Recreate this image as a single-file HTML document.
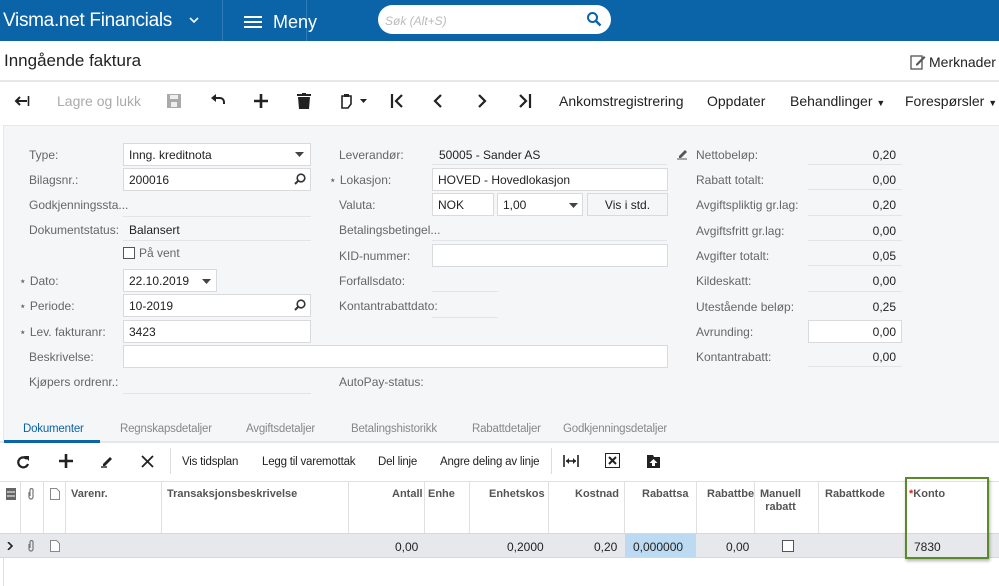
<!DOCTYPE html>
<html><head><meta charset="utf-8"><style>
*{box-sizing:border-box;margin:0;padding:0}
body{width:999px;height:586px;overflow:hidden;background:#fff;font-family:"Liberation Sans",Arial,sans-serif;font-size:12px;color:#222;position:relative}
.a{position:absolute;white-space:nowrap}
.lbl{color:#666;font-size:12px}
.inp{position:absolute;background:#fff;border:1px solid #d8dadd;height:23px;padding:4px 5px;font-size:12px;color:#222}
.ul{position:absolute;border-bottom:1px solid #e2e4e6;height:1px}
.val{position:absolute;font-size:12px;color:#222;text-align:right;width:60px}
.tb{position:absolute;top:93px;font-size:14px;color:#222}
.th{position:absolute;top:488px;font-size:11px;font-weight:bold;color:#555}
.vl{position:absolute;top:482px;height:51px;border-left:1px solid #e0e0e0}
.gt{position:absolute;top:456px;font-size:11.5px;color:#222;letter-spacing:-0.2px}
.tab{position:absolute;top:423px;font-size:11.5px;color:#888;letter-spacing:-0.2px}
</style></head><body>
<div class="a" style="left:0;top:0;width:999px;height:41px;background:#0b63a8"></div>
<div class="a" style="left:3px;top:10px;font-size:19px;color:#fff;letter-spacing:-0.3px">Visma.net Financials</div>
<svg class="a" style="left:189px;top:16px" width="10" height="8"><path d="M1 2l4 4 4-4" stroke="#fff" stroke-width="1.6" fill="none"/></svg>
<div class="a" style="left:222px;top:0;width:1px;height:41px;background:#2f7cb8"></div>
<div class="a" style="left:306px;top:0;width:1px;height:41px;background:#2f7cb8"></div>
<svg class="a" style="left:244px;top:15px" width="18" height="14"><path d="M0 2h18M0 7h18M0 12h18" stroke="#fff" stroke-width="2"/></svg>
<div class="a" style="left:273px;top:12px;font-size:18px;color:#fff">Meny</div>
<div class="a" style="left:378px;top:5px;width:233px;height:29px;background:#fff;border-radius:15px"></div>
<div class="a" style="left:385px;top:14px;font-size:12px;color:#bbb;font-style:italic">Søk (Alt+S)</div>
<svg class="a" style="left:586px;top:11px" width="16" height="16"><circle cx="6.5" cy="6.5" r="4.5" stroke="#0b63a8" stroke-width="2" fill="none"/><path d="M10 10l4.5 4.5" stroke="#0b63a8" stroke-width="2.4"/></svg>
<div class="a" style="left:4px;top:51px;font-size:17px;color:#222">Inngående faktura</div>
<svg class="a" style="left:910px;top:54px" width="16" height="16"><rect x="1" y="2" width="11" height="13" fill="none" stroke="#555" stroke-width="1.3"/><path d="M6 10l8-8 1.5 1.5-8 8H6z" fill="#555"/></svg>
<div class="a" style="left:929px;top:54px;font-size:14px">Merknader</div>
<div class="a" style="left:0;top:80px;width:999px;height:2px;background:#e6e7e9"></div>
<svg class="a" style="left:14px;top:95px" width="16" height="12"><path d="M2 6h11M6 2L2 6l4 4" stroke="#222" stroke-width="2" fill="none"/><path d="M14.5 1v10" stroke="#222" stroke-width="1.6"/></svg>
<div class="tb" style="left:57px;color:#aaa">Lagre og lukk</div>
<svg class="a" style="left:167px;top:94px" width="14" height="14"><rect x="0" y="0" width="14" height="14" fill="#aaa"/><rect x="3" y="1" width="8" height="4" fill="#eee"/><rect x="4" y="8" width="6" height="5" fill="#eee"/></svg>
<svg class="a" style="left:210px;top:94px" width="16" height="12"><path d="M3 4h7a4 4 0 0 1 4 4v2" stroke="#222" stroke-width="2" fill="none"/><path d="M1 4l5-4v8z" fill="#222"/></svg>
<svg class="a" style="left:254px;top:94px" width="14" height="14"><path d="M7 0v14M0 7h14" stroke="#222" stroke-width="2.6"/></svg>
<svg class="a" style="left:297px;top:93px" width="14" height="16"><rect x="0" y="1" width="14" height="2" fill="#222"/><rect x="5" y="0" width="4" height="2" fill="#222"/><path d="M1 4h12l-1 12H2z" fill="#222"/></svg>
<svg class="a" style="left:340px;top:93px" width="30" height="16"><path d="M2 3h9v8l-3 4H2z" fill="none" stroke="#222" stroke-width="1.6"/><rect x="4" y="1" width="5" height="3" fill="#222"/><path d="M20 6h7l-3.5 4z" fill="#222"/></svg>
<svg class="a" style="left:390px;top:94px" width="14" height="14"><path d="M2 0v14" stroke="#222" stroke-width="2.2"/><path d="M12 1L6 7l6 6" stroke="#222" stroke-width="2.2" fill="none"/></svg>
<svg class="a" style="left:433px;top:94px" width="10" height="14"><path d="M8 1L2 7l6 6" stroke="#222" stroke-width="2.2" fill="none"/></svg>
<svg class="a" style="left:477px;top:94px" width="10" height="14"><path d="M2 1l6 6-6 6" stroke="#222" stroke-width="2.2" fill="none"/></svg>
<svg class="a" style="left:518px;top:94px" width="14" height="14"><path d="M2 1l6 6-6 6" stroke="#222" stroke-width="2.2" fill="none"/><path d="M12 0v14" stroke="#222" stroke-width="2.2"/></svg>
<div class="tb" style="left:559px">Ankomstregistrering</div>
<div class="tb" style="left:707px">Oppdater</div>
<div class="tb" style="left:790px">Behandlinger <span style="font-size:9px">▼</span></div>
<div class="tb" style="left:905px">Forespørsler <span style="font-size:9px">▼</span></div>
<div class="a" style="left:3px;top:125px;width:996px;height:285px;background:#f5f6f7;border-top:1px solid #e6e7e9;border-left:1px solid #e6e7e9"></div>
<div class="a lbl" style="left:29px;top:148px">Type:</div>
<div class="inp" style="left:123px;top:143px;width:188px">Inng. kreditnota</div>
<svg class="a" style="left:295px;top:152px" width="9" height="5"><path d="M0 0h9L4.5 5z" fill="#444"/></svg>
<div class="a lbl" style="left:29px;top:173px">Bilagsnr.:</div>
<div class="inp" style="left:123px;top:168px;width:188px">200016</div>
<div class="a lbl" style="left:29px;top:198px">Godkjenningssta...</div>
<div class="ul" style="left:123px;top:216px;width:188px"></div>
<div class="a lbl" style="left:29px;top:223px">Dokumentstatus:</div>
<div class="a" style="left:129px;top:223px">Balansert</div>
<div class="ul" style="left:123px;top:240px;width:188px"></div>
<div class="a" style="left:123px;top:247px;width:12px;height:12px;border:1px solid #555;background:#fff"></div>
<div class="a lbl" style="left:139px;top:246px">På vent</div>
<div class="a lbl" style="left:19px;top:274px">⋆ Dato:</div>
<div class="inp" style="left:123px;top:269px;width:94px">22.10.2019</div>
<svg class="a" style="left:202px;top:279px" width="9" height="5"><path d="M0 0h9L4.5 5z" fill="#444"/></svg>
<div class="a lbl" style="left:19px;top:299px">⋆ Periode:</div>
<div class="inp" style="left:123px;top:294px;width:188px">10-2019</div>
<div class="a lbl" style="left:19px;top:325px">⋆ Lev. fakturanr:</div>
<div class="inp" style="left:123px;top:320px;width:188px">3423</div>
<div class="a lbl" style="left:29px;top:350px">Beskrivelse:</div>
<div class="inp" style="left:123px;top:345px;width:545px"></div>
<div class="a lbl" style="left:29px;top:375px">Kjøpers ordrenr.:</div>
<div class="ul" style="left:123px;top:393px;width:188px"></div>
<svg class="a" style="left:294px;top:173px" width="12" height="12"><circle cx="7" cy="5" r="3.8" stroke="#333" stroke-width="1.6" fill="none"/><path d="M4.3 7.7L1 11" stroke="#333" stroke-width="2"/></svg>
<svg class="a" style="left:294px;top:299px" width="12" height="12"><circle cx="7" cy="5" r="3.8" stroke="#333" stroke-width="1.6" fill="none"/><path d="M4.3 7.7L1 11" stroke="#333" stroke-width="2"/></svg>
<svg class="a" style="left:651px;top:173px" width="12" height="12"><circle cx="7" cy="5" r="3.8" stroke="#333" stroke-width="1.6" fill="none"/><path d="M4.3 7.7L1 11" stroke="#333" stroke-width="2"/></svg>
<svg class="a" style="left:477px;top:198px" width="12" height="12"><circle cx="7" cy="5" r="3.8" stroke="#333" stroke-width="1.6" fill="none"/><path d="M4.3 7.7L1 11" stroke="#333" stroke-width="2"/></svg>
<div class="a lbl" style="left:339px;top:148px">Leverandør:</div>
<div class="a" style="left:439px;top:148px">50005 - Sander AS</div>
<div class="ul" style="left:432px;top:164px;width:235px"></div>
<div class="a lbl" style="left:329px;top:173px">⋆ Lokasjon:</div>
<div class="inp" style="left:432px;top:168px;width:236px">HOVED - Hovedlokasjon</div>
<div class="a lbl" style="left:339px;top:198px">Valuta:</div>
<div class="inp" style="left:432px;top:193px;width:62px">NOK</div>
<div class="inp" style="left:497px;top:193px;width:86px">1,00</div>
<svg class="a" style="left:569px;top:203px" width="9" height="5"><path d="M0 0h9L4.5 5z" fill="#444"/></svg>
<div class="inp" style="left:587px;top:193px;width:81px;background:#f5f6f7;text-align:center">Vis i std.</div>
<div class="a lbl" style="left:339px;top:223px">Betalingsbetingel...</div>
<div class="ul" style="left:432px;top:240px;width:235px"></div>
<div class="a lbl" style="left:339px;top:249px">KID-nummer:</div>
<div class="inp" style="left:432px;top:244px;width:236px"></div>
<div class="a lbl" style="left:339px;top:274px">Forfallsdato:</div>
<div class="ul" style="left:432px;top:291px;width:66px"></div>
<div class="a lbl" style="left:339px;top:299px">Kontantrabattdato:</div>
<div class="ul" style="left:432px;top:317px;width:66px"></div>
<div class="a lbl" style="left:339px;top:375px">AutoPay-status:</div>
<svg class="a" style="left:676px;top:148px" width="13" height="12"><path d="M3 8l6-6 2 2-6 6H3z" fill="#555"/><path d="M1 11h10" stroke="#555"/></svg>
<div class="a lbl" style="left:696px;top:148px">Nettobeløp:</div>
<div class="a lbl" style="left:696px;top:173px">Rabatt totalt:</div>
<div class="a lbl" style="left:696px;top:198px">Avgiftspliktig gr.lag:</div>
<div class="a lbl" style="left:696px;top:224px">Avgiftsfritt gr.lag:</div>
<div class="a lbl" style="left:696px;top:249px">Avgifter totalt:</div>
<div class="a lbl" style="left:696px;top:274px">Kildeskatt:</div>
<div class="a lbl" style="left:696px;top:300px">Utestående beløp:</div>
<div class="a lbl" style="left:696px;top:325px">Avrunding:</div>
<div class="a lbl" style="left:696px;top:350px">Kontantrabatt:</div>
<div class="inp" style="left:808px;top:320px;width:94px"></div>
<div class="val" style="left:836px;top:148px">0,20</div>
<div class="val" style="left:836px;top:173px">0,00</div>
<div class="val" style="left:836px;top:198px">0,20</div>
<div class="val" style="left:836px;top:224px">0,00</div>
<div class="val" style="left:836px;top:249px">0,05</div>
<div class="val" style="left:836px;top:274px">0,00</div>
<div class="val" style="left:836px;top:300px">0,25</div>
<div class="val" style="left:836px;top:325px">0,00</div>
<div class="val" style="left:836px;top:350px">0,00</div>
<div class="ul" style="left:808px;top:164px;width:94px"></div>
<div class="ul" style="left:808px;top:189px;width:94px"></div>
<div class="ul" style="left:808px;top:215px;width:94px"></div>
<div class="ul" style="left:808px;top:240px;width:94px"></div>
<div class="ul" style="left:808px;top:265px;width:94px"></div>
<div class="ul" style="left:808px;top:291px;width:94px"></div>
<div class="ul" style="left:808px;top:366px;width:94px"></div>
<div class="a" style="left:3px;top:410px;width:996px;height:32px;background:#f5f6f7;border-left:1px solid #e6e7e9"></div>
<div class="a" style="left:0;top:441px;width:999px;height:2px;background:#e6e7e9"></div>
<div class="tab" style="left:23px;color:#0b63a8">Dokumenter</div>
<div class="a" style="left:4px;top:440px;width:96px;height:3px;background:#0b63a8"></div>
<div class="tab" style="left:120px">Regnskapsdetaljer</div>
<div class="tab" style="left:246px">Avgiftsdetaljer</div>
<div class="tab" style="left:351px">Betalingshistorikk</div>
<div class="tab" style="left:472px">Rabattdetaljer</div>
<div class="tab" style="left:563px">Godkjenningsdetaljer</div>
<svg class="a" style="left:16px;top:455px" width="14" height="14"><path d="M11 4A5 5 0 1 0 12 9" stroke="#222" stroke-width="2.2" fill="none"/><path d="M8 1h5v5z" fill="#222"/></svg>
<svg class="a" style="left:59px;top:454px" width="14" height="14"><path d="M7 0v14M0 7h14" stroke="#222" stroke-width="2.6"/></svg>
<svg class="a" style="left:100px;top:454px" width="14" height="14"><path d="M3 10l7-7 2 2-7 7H3z" fill="#222"/><path d="M1 13h6" stroke="#222" stroke-width="1.4"/></svg>
<svg class="a" style="left:141px;top:455px" width="13" height="13"><path d="M1 1l11 11M12 1L1 12" stroke="#222" stroke-width="1.8"/></svg>
<div class="a" style="left:170px;top:448px;width:1px;height:26px;background:#ddd"></div>
<div class="gt" style="left:182px">Vis tidsplan</div>
<div class="gt" style="left:262px">Legg til varemottak</div>
<div class="gt" style="left:378px">Del linje</div>
<div class="gt" style="left:440px">Angre deling av linje</div>
<div class="a" style="left:551px;top:448px;width:1px;height:26px;background:#ddd"></div>
<svg class="a" style="left:563px;top:455px" width="16" height="12"><path d="M1 0v12M15 0v12M3 6h10" stroke="#222" stroke-width="1.6"/><path d="M3 6l3-3v6zM13 6l-3-3v6z" fill="#222"/></svg>
<svg class="a" style="left:605px;top:453px" width="15" height="15"><rect x="0.5" y="0.5" width="14" height="14" fill="#fff" stroke="#222"/><path d="M4 4l7 7M11 4l-7 7" stroke="#222" stroke-width="2"/></svg>
<svg class="a" style="left:646px;top:452px" width="15" height="17"><path d="M1 3h6l1 2h6v11H1z" fill="#222"/><path d="M7.5 7l4 4H9v3H6v-3H3.5z" fill="#fff"/></svg>
<div class="a" style="left:0;top:481px;width:999px;height:1px;background:#e0e0e0"></div>
<div class="vl" style="left:20px"></div><div class="vl" style="left:43px"></div><div class="vl" style="left:65px"></div>
<div class="vl" style="left:161px"></div><div class="vl" style="left:348px"></div><div class="vl" style="left:424px"></div>
<div class="vl" style="left:469px"></div><div class="vl" style="left:548px"></div><div class="vl" style="left:624px"></div>
<div class="vl" style="left:696px"></div><div class="vl" style="left:754px"></div><div class="vl" style="left:818px"></div>
<svg class="a" style="left:6px;top:488px" width="10" height="12"><rect x="0" y="0" width="10" height="12" fill="#666"/><path d="M1 4h8M1 8h8" stroke="#fff"/></svg>
<svg class="a" style="left:27px;top:488px" width="8" height="12"><path d="M2 4v5a2 2 0 0 0 4 0V2a1.5 1.5 0 0 0-3 0v6" stroke="#777" stroke-width="1.2" fill="none"/></svg>
<svg class="a" style="left:50px;top:488px" width="10" height="12"><path d="M.5.5h6l3 3v8h-9z" fill="#fff" stroke="#888"/></svg>
<div class="th" style="left:71px">Varenr.</div>
<div class="th" style="left:167px">Transaksjonsbeskrivelse</div>
<div class="th" style="left:392px">Antall</div>
<div class="th" style="left:428px">Enhe</div>
<div class="th" style="left:489px">Enhetskos</div>
<div class="th" style="left:575px">Kostnad</div>
<div class="th" style="left:642px">Rabattsa</div>
<div class="th" style="left:707px">Rabattbe</div>
<div class="th" style="left:760px;text-align:center;line-height:13px">Manuell<br>rabatt</div>
<div class="th" style="left:825px">Rabattkode</div>
<div class="th" style="left:909px"><span style="color:#d22">*</span>Konto</div>
<div class="a" style="left:0;top:533px;width:999px;height:25px;background:#e6e8eb;border-top:1px solid #d8d8d8;border-bottom:1px solid #d8d8d8"></div>
<div class="a" style="left:625px;top:534px;width:71px;height:23px;background:#bcdaf2"></div>
<svg class="a" style="left:7px;top:542px" width="6" height="8"><path d="M1 0l4 4-4 4" stroke="#222" stroke-width="1.6" fill="none"/></svg>
<svg class="a" style="left:27px;top:540px" width="8" height="12"><path d="M2 4v5a2 2 0 0 0 4 0V2a1.5 1.5 0 0 0-3 0v6" stroke="#777" stroke-width="1.2" fill="none"/></svg>
<svg class="a" style="left:50px;top:540px" width="10" height="12"><path d="M.5.5h6l3 3v8h-9z" fill="#fff" stroke="#888"/></svg>
<div class="a" style="left:395px;top:540px">0,00</div>
<div class="a" style="left:507px;top:540px">0,2000</div>
<div class="a" style="left:594px;top:540px">0,20</div>
<div class="a" style="left:633px;top:540px">0,000000</div>
<div class="a" style="left:726px;top:540px">0,00</div>
<div class="a" style="left:782px;top:540px;width:12px;height:12px;border:1px solid #555;background:#fff"></div>
<div class="a" style="left:914px;top:540px">7830</div>
<div class="a" style="left:905px;top:477px;width:84px;height:82px;border:2px solid #5a8a2a;box-shadow:1px 2px 3px rgba(0,0,0,.3)"></div>
<div class="a" style="left:3px;top:558px;width:1px;height:28px;background:#e0e0e0"></div>
</body></html>
